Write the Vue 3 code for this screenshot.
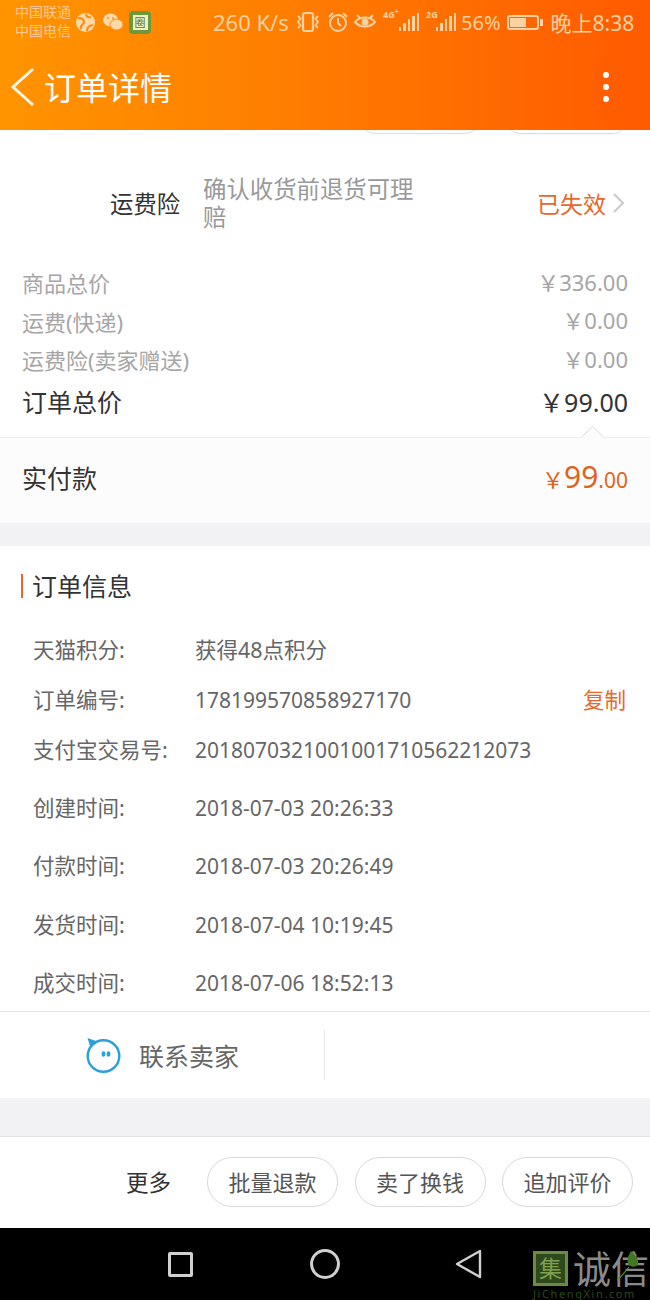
<script setup>
const prices = [
  { label: '商品总价', value: '￥336.00' },
  { label: '运费(快递)', value: '￥0.00' },
  { label: '运费险(卖家赠送)', value: '￥0.00' },
]
const infoRows = [
  { label: '天猫积分:', value: '获得48点积分', gap: 0, cn: true },
  { label: '订单编号:', value: '178199570858927170', copy: true, gap: 20 },
  { label: '支付宝交易号:', value: '2018070321001001710562212073', gap: 20 },
  { label: '创建时间:', value: '2018-07-03 20:26:33', gap: 28 },
  { label: '付款时间:', value: '2018-07-03 20:26:49', gap: 28 },
  { label: '发货时间:', value: '2018-07-04 10:19:45', gap: 29 },
  { label: '成交时间:', value: '2018-07-06 18:52:13', gap: 28 },
]
const bars = [4, 8, 12, 15, 18]
</script>

<template>
  <div class="page">
    <header class="header">
      <div class="status">
        <div class="carriers"><span>中国联通</span><span>中国电信</span></div>
        <svg class="app-icon globe" width="19" height="19" viewBox="0 0 19 19">
          <circle cx="9.5" cy="9.5" r="9.5" fill="#fcd9a8" />
          <path d="M2 5c3 0 6 1 6 4 0 3-4 2-3 7M10 1c0 2 2 4 5 3M11 18c0-4 2-5 6-6" stroke="#ff8a10" stroke-width="2" fill="none" />
        </svg>
        <svg class="app-icon wechat" width="20" height="18" viewBox="0 0 20 18">
          <ellipse cx="7.5" cy="7" rx="7.5" ry="6.5" fill="#fcd9a8" />
          <ellipse cx="13.5" cy="11.5" rx="6.5" ry="5.5" fill="#fcd9a8" stroke="#ff8a10" />
          <circle cx="5" cy="5" r="1" fill="#ff8a10" />
          <circle cx="10" cy="5" r="1" fill="#ff8a10" />
        </svg>
        <span class="green-app"><i>圈</i></span>
        <span class="speed">260 K/s</span>
        <svg width="26" height="22" viewBox="0 0 26 22" class="sicon vib">
          <rect x="8" y="2" width="10" height="18" rx="2" fill="none" stroke="currentColor" stroke-width="2.2" />
          <path d="M3 5l2.500 2.500-2.500 3.500 2.500 3.500-2.500 2.500M23 5l-2.500 2.500 2.500 3.500-2.500 3.500 2.500 2.500" fill="none" stroke="currentColor" stroke-width="1.8" />
        </svg>
        <svg width="22" height="22" viewBox="0 0 22 22" class="sicon alarm">
          <circle cx="11" cy="12" r="8" fill="none" stroke="currentColor" stroke-width="2" />
          <path d="M11 7v5l3 3M2 6l4-4M20 6l-4-4" fill="none" stroke="currentColor" stroke-width="2" />
        </svg>
        <svg width="24" height="20" viewBox="0 0 24 20" class="sicon eye">
          <path d="M2 10c5-6 15-6 20 0-5 6-15 6-20 0z" fill="none" stroke="currentColor" stroke-width="2" />
          <circle cx="12" cy="10" r="3.5" fill="currentColor" />
          <path d="M4 3l3 3M20 3l-3 3" stroke="currentColor" stroke-width="2" />
        </svg>
        <div class="signal">
          <small>4G<sup>+</sup></small>
          <span class="bars"><i v-for="b in bars" :key="b" :style="{ height: b + 'px' }"></i></span>
        </div>
        <div class="signal second">
          <small>2G</small>
          <span class="bars"><i v-for="b in bars" :key="b" :style="{ height: b + 'px' }"></i></span>
        </div>
        <span class="pct">56%</span>
        <span class="battery"><i></i></span>
        <span class="clock">晚上8:38</span>
      </div>
      <div class="titlebar">
        <svg class="back" width="24" height="40" viewBox="0 0 24 40">
          <path d="M23 2L3 20l20 18" fill="none" stroke="#fff5e6" stroke-width="3" />
        </svg>
        <h1>订单详情</h1>
        <div class="dots"><i></i><i></i><i></i></div>
      </div>
    </header>

    <section class="top">
      <div class="ghost-btns"><span class="g1"></span><span class="g2"></span></div>
      <div class="insure">
        <span class="ins-name">运费险</span>
        <span class="ins-desc">确认收货前退货可理赔</span>
        <span class="ins-state">已失效</span>
        <svg width="14" height="24" viewBox="0 0 14 24" class="chev">
          <path d="M2 3l9 9-9 9" fill="none" stroke="#c9c9c9" stroke-width="2" />
        </svg>
      </div>
      <div class="prices">
        <div v-for="p in prices" :key="p.label" class="price-row">
          <span>{{ p.label }}</span><span class="num">{{ p.value }}</span>
        </div>
      </div>
      <div class="total">
        <span>订单总价</span><span class="num">￥99.00</span>
      </div>
      <div class="paid">
        <span class="notch"></span>
        <span class="paid-label">实付款</span>
        <span class="paid-val"><small>￥</small><b>99</b><em>.00</em></span>
      </div>
    </section>

    <section class="info">
      <h2>订单信息</h2>
      <div v-for="r in infoRows" :key="r.label" class="info-row" :style="{ marginTop: r.gap + 'px' }">
        <span class="k">{{ r.label }}</span>
        <span class="v" :class="{ cn: r.cn }">{{ r.value }}</span>
        <span v-if="r.copy" class="copy">复制</span>
      </div>
    </section>

    <section class="contact">
      <div class="contact-cell">
        <svg width="36" height="36" viewBox="0 0 36 36">
          <circle cx="18.5" cy="19" r="15.8" fill="none" stroke="#2a9fd8" stroke-width="2.4" />
          <path d="M2.500 1l10 3.500-7 6z" fill="#2a9fd8" />
          <ellipse cx="18.5" cy="17" rx="1.9" ry="2.800" fill="#2a9fd8" />
          <ellipse cx="23.5" cy="17" rx="1.9" ry="2.800" fill="#2a9fd8" />
        </svg>
        <span>联系卖家</span>
      </div>
      <div class="contact-cell empty"></div>
    </section>

    <div class="gap"></div>

    <footer class="actions">
      <span class="more">更多</span>
      <span class="btn">批量退款</span>
      <span class="btn">卖了换钱</span>
      <span class="btn">追加评价</span>
    </footer>

    <nav class="nav">
      <span class="square"></span>
      <span class="circle"></span>
      <svg width="30" height="32" viewBox="0 0 30 32" class="tri">
        <path d="M26 3v26L3 16z" fill="none" stroke="#d0d0d0" stroke-width="2.4" stroke-linejoin="round" />
      </svg>
      <div class="watermark">
        <div class="wm-top">
          <span class="wm-box"><i>集</i></span>
          <span class="wm-text">诚信</span>
          <svg class="leaf" width="24" height="34" viewBox="0 0 24 34">
            <path d="M14 3c5 5 8 9 7 13-1 3-6 4-9 1-3-4-1-9 2-14z" fill="#3f7a22" />
            <path d="M0 32c4-3 8-8 12-13" stroke="#4f8f2c" stroke-width="1.2" fill="none" />
          </svg>
        </div>
        <div class="wm-url">JiChengXin.com</div>
      </div>
    </nav>
  </div>
</template>

<style>
html, body { margin: 0; background: #fff; }
</style>

<style scoped>
.page {
  width: 650px;
  height: 1300px;
  overflow: hidden;
  display: flex;
  flex-direction: column;
  background: #fff;
  font-family: "Noto Sans", "Noto Sans CJK SC", sans-serif;
  color: #666;
}
.header {
  height: 130px;
  flex: none;
  background: linear-gradient(90deg, #ff9400 0%, #ff7d00 45%, #ff5a00 100%);
}
.status {
  height: 44px;
  display: flex;
  align-items: center;
  padding-left: 15px;
  color: #fdd2a2;
}
.carriers {
  display: flex;
  flex-direction: column;
  font-size: 14px;
  line-height: 19px;
  width: 57px;
  flex: none;
  margin-top: -2px;
  color: #fcc88f;
}
.app-icon { flex: none; }
.globe { margin-left: 4px; }
.wechat { margin-left: 8px; }
.green-app {
  width: 22px;
  height: 23px;
  margin-left: 6px;
  border-radius: 4px;
  background: #6c9a3a;
  display: flex;
  align-items: center;
  justify-content: center;
  flex: none;
}
.green-app i {
  width: 15px;
  height: 15px;
  font-style: normal;
  font-size: 11px;
  line-height: 15px;
  text-align: center;
  background: #f5eec0;
  color: #4e7a2a;
}
.speed { font-size: 22px; margin-left: 62px; flex: none; width: 78px; white-space: nowrap; }
.sicon { flex: none; }
.vib { margin-left: 4px; }
.alarm { margin-left: 6px; }
.eye { margin-left: 4px; }
.signal {
  position: relative;
  width: 36px;
  height: 24px;
  margin-left: 6px;
  flex: none;
}
.signal.second { margin-left: 7px; width: 30px; }
.signal small {
  position: absolute;
  left: 0;
  top: -1px;
  font-size: 9px;
  line-height: 11px;
  font-weight: 700;
  white-space: nowrap;
}
.signal sup { font-size: 7px; line-height: 0; }
.bars {
  position: absolute;
  right: 0;
  bottom: 3px;
  display: flex;
  align-items: flex-end;
  gap: 2px;
}
.bars i { width: 2.5px; background: currentColor; display: block; }
.pct { font-size: 20px; margin-left: 5px; flex: none; }
.battery {
  width: 32px;
  height: 15px;
  border: 2px solid #fdd2a2;
  border-radius: 3px;
  margin-left: 6px;
  position: relative;
  flex: none;
  box-sizing: border-box;
}
.battery i {
  position: absolute;
  left: 1px;
  top: 1px;
  bottom: 1px;
  width: 16px;
  background: #fdd2a2;
}
.battery::after {
  content: "";
  position: absolute;
  right: -6px;
  top: 2px;
  width: 3px;
  height: 7px;
  background: #fdd2a2;
}
.clock { font-size: 21px; margin-left: 12px; flex: none; white-space: nowrap; }
.titlebar {
  height: 86px;
  display: flex;
  align-items: center;
  padding: 0 41px 0 10px;
}
.back { flex: none; }
.titlebar h1 {
  margin: -2px 0 0 10px;
  font-size: 32px;
  font-weight: 400;
  color: #fff;
  flex: 1;
}
.dots { display: flex; flex-direction: column; gap: 6px; }
.dots i { width: 6px; height: 6px; border-radius: 50%; background: #fff; display: block; }

.top { flex: none; height: 393px; display: flex; flex-direction: column; }
.ghost-btns { height: 4px; position: relative; overflow: hidden; flex: none; }
.ghost-btns span {
  position: absolute;
  bottom: 0;
  height: 30px;
  border: 1px solid #dcdcdc;
  border-radius: 16px;
  box-sizing: border-box;
}
.g1 { left: 360px; width: 120px; }
.g2 { left: 505px; width: 123px; }
.insure {
  height: 116px;
  padding-top: 22px;
  box-sizing: border-box;
  display: flex;
  align-items: center;
  flex: none;
}
.ins-name { margin-left: 110px; width: 93px; font-size: 23.4px; color: #333; flex: none; }
.ins-desc { width: 215px; font-size: 23.4px; line-height: 28px; color: #999; flex: none; }
.ins-state { margin-left: 119px; font-size: 23px; color: #e8672a; flex: none; white-space: nowrap; }
.chev { margin-left: 6px; flex: none; }
.prices { padding: 13px 22px 0; }
.price-row {
  height: 38.5px;
  display: flex;
  justify-content: space-between;
  align-items: center;
  font-size: 22px;
  color: #a6a6a6;
}
.price-row .num { margin-bottom: 3px; }
.total {
  height: 38px;
  margin-top: 3px;
  padding: 0 22px;
  display: flex;
  justify-content: space-between;
  align-items: center;
  font-size: 25px;
  color: #333;
}
.paid {
  margin-top: 17.5px;
  height: 86px;
  flex: none;
  border-top: 1px solid #eeeeee;
  box-sizing: border-box;
  background: #fdfcfd;
  padding: 0 22px 8px;
  display: flex;
  justify-content: space-between;
  align-items: center;
  position: relative;
}
.notch {
  position: absolute;
  right: 49px;
  top: -9px;
  width: 16px;
  height: 16px;
  background: #fdfcfd;
  border-top: 1px solid #e4e4e4;
  border-left: 1px solid #e4e4e4;
  transform: rotate(45deg);
}
.paid-label { font-size: 25px; color: #333; }
.paid-val { color: #dd6420; display: flex; align-items: baseline; }
.paid-val small { font-size: 22px; }
.paid-val b { font-weight: 400; font-size: 30px; }
.paid-val em { font-style: normal; font-size: 21px; }

.info {
  flex: none;
  border-top: 23px solid #f2f2f4;
  height: 489px;
  box-sizing: border-box;
  border-bottom: 1px solid #e2e2e2;
  overflow: hidden;
}
.info h2 {
  margin: 28px 0 36px 21px;
  height: 24px;
  line-height: 24px;
  border-left: 2px solid #e8672a;
  padding-left: 9px;
  font-size: 25px;
  font-weight: 400;
  color: #333;
}
.info-row {
  height: 30px;
  display: flex;
  align-items: center;
  padding: 0 23px 0 33px;
  color: #666;
}
.k { width: 162px; flex: none; white-space: nowrap; font-size: 21.5px; margin-top: -2px; }
.v { flex: 1; white-space: nowrap; font-size: 21px; margin-top: 2px; }
.v.cn { font-size: 21.5px; margin-top: -2px; }
.copy { color: #e8672a; flex: none; font-size: 21.5px; margin-top: -2px; padding-right: 1px; }

.contact { height: 86px; flex: none; display: flex; align-items: center; box-sizing: border-box; }
.contact-cell {
  width: 326px;
  height: 50px;
  display: flex;
  align-items: center;
  justify-content: center;
  gap: 18px;
  font-size: 25px;
  color: #666;
  border-right: 1px solid #e8e8e8;
  box-sizing: border-box;
}
.contact-cell.empty { border: 0; }
.gap { height: 38px; flex: none; background: #f2f2f4; }
.actions {
  height: 92px;
  flex: none;
  border-top: 1px solid #e2e2e2;
  box-sizing: border-box;
  display: flex;
  align-items: center;
  justify-content: flex-end;
  padding: 0 17px 2px 0;
  gap: 16.5px;
}
.more { font-size: 22.5px; color: #333; margin-right: 19.5px; }
.btn {
  width: 131px;
  height: 50px;
  line-height: 48px;
  text-align: center;
  box-sizing: border-box;
  border: 1px solid #d8d8d8;
  border-radius: 25px;
  font-size: 22px;
  color: #555;
}
.nav {
  flex: 1;
  background: #000;
  position: relative;
  display: flex;
  align-items: center;
  padding-left: 168px;
}
.square { width: 25px; height: 25px; border: 3px solid #d0d0d0; border-radius: 2px; box-sizing: border-box; flex: none; }
.circle { width: 30px; height: 30px; border: 3px solid #d0d0d0; border-radius: 50%; box-sizing: border-box; margin-left: 117px; flex: none; }
.tri { margin-left: 114px; flex: none; }
.watermark { position: absolute; left: 533px; top: 23px; width: 120px; }
.wm-top { display: flex; align-items: center; position: relative; }
.wm-box {
  width: 35px;
  height: 35px;
  box-sizing: border-box;
  border: 3px solid #6d8a45;
  background: #2e4a1c;
  display: flex;
  align-items: center;
  justify-content: center;
}
.wm-box i { font-style: normal; font-size: 23px; line-height: 1; color: #7fa04e; }
.wm-text { font-size: 38px; line-height: 35px; color: #8a8a8a; margin-left: 5px; white-space: nowrap; }
.leaf { position: absolute; left: 84px; top: -3px; }
.wm-url { font-size: 11px; line-height: 14px; color: #2a4a1a; letter-spacing: 1.6px; white-space: nowrap; margin-top: 1px; }
</style>
